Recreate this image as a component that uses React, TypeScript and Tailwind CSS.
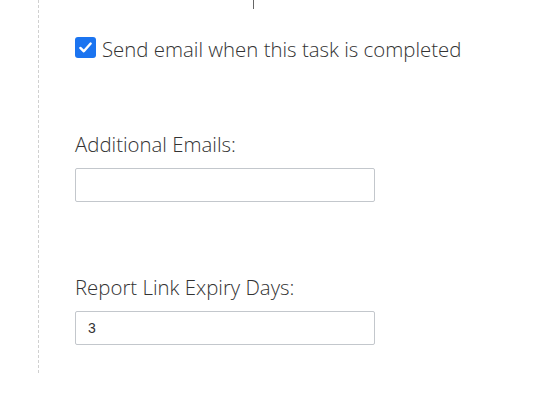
import React from "react";

const font = { fontFamily: '"Open Sans", "Liberation Sans", sans-serif' };

function Field({ label, value }: { label: string; value?: string }) {
  return (
    <div className="flex flex-col">
      <label className="text-[20.4px] leading-[28px] font-light text-[#333]">{label}</label>
      <input
        readOnly
        value={value ?? ""}
        className="mt-[10px] w-[300px] h-[34px] border border-[#c3c7cc] rounded-[2px] px-[12px] text-[14px] text-[#333] font-['Liberation_Sans',sans-serif] outline-none"
      />
    </div>
  );
}

export default function App() {
  return (
    <div className="h-[400px] w-[541px] bg-white pl-[38px]" style={font}>
      <div className="h-[373px] border-l border-dashed border-[#d0d0d0] pl-[36px]">
        {/* cut-off descender from text above */}
        <div className="ml-[178px] w-px h-[9px] bg-[#666]" />

        <div className="mt-[28px] flex items-center gap-[6px]">
          <div className="-mt-[6px] w-[21px] h-[21px] rounded-[3px] bg-[#1b74f0] flex items-center justify-center">
            <svg width="15" height="15" viewBox="0 0 16 16">
              <path d="M2.5 8.5 L6.2 12 L13.5 3.8" fill="none" stroke="white" strokeWidth="2.6" strokeLinecap="round" strokeLinejoin="round" />
            </svg>
          </div>
          <span className="text-[20.4px] leading-[28px] font-light text-[#333] -mt-[2px]">
            Send email when this task is completed
          </span>
        </div>

        <div className="mt-[67px]">
          <Field label="Additional Emails:" />
        </div>
        <div className="mt-[71px]">
          <Field label="Report Link Expiry Days:" value="3" />
        </div>
      </div>
    </div>
  );
}
